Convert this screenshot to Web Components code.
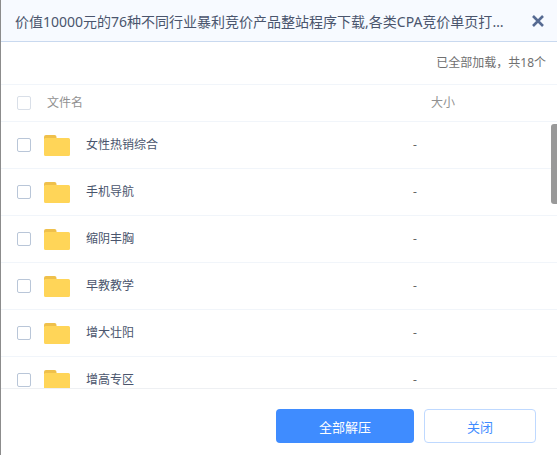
<!DOCTYPE html>
<html lang="zh">
<head>
<meta charset="utf-8">
<style>
  html, body { margin: 0; height: 100%; background: #fff; overflow: hidden; }
  body { font-family: "Noto Sans", "Noto Sans CJK SC", sans-serif; }
</style>
</head>
<body>
<archive-dialog>
  <span slot="title">价值10000元的76种不同行业暴利竞价产品整站程序下载,各类CPA竞价单页打包合集</span>
  <file-row name="女性热销综合"></file-row>
  <file-row name="手机导航"></file-row>
  <file-row name="缩阴丰胸"></file-row>
  <file-row name="早教教学"></file-row>
  <file-row name="增大壮阳"></file-row>
  <file-row name="增高专区"></file-row>
</archive-dialog>

<script>
// small square checkbox used in the header and in each row
class FileCheck extends HTMLElement {
  constructor() {
    super();
    this.attachShadow({ mode: 'open' });
    this.shadowRoot.innerHTML = `
      <style>
        :host {
          display: block;
          width: 14px;
          height: 14px;
          box-sizing: border-box;
          border: 1px solid var(--check-border, #b9c6d8);
          border-radius: 2px;
          background: #fff;
        }
      </style>`;
  }
}
customElements.define('file-check', FileCheck);

class FolderIcon extends HTMLElement {
  constructor() {
    super();
    this.attachShadow({ mode: 'open' });
    this.shadowRoot.innerHTML = `
      <style>
        :host { display: block; width: 26px; height: 21px; }
        svg { display: block; }
      </style>
      <svg width="26" height="21" viewBox="0 0 26 21">
        <path d="M0 2a2 2 0 0 1 2-2h8.500a2 2 0 0 1 2 2v2H0z" fill="#efc04b"/>
        <path d="M0 4.500a1.500 1.500 0 0 1 1.500-1.500h23a1.500 1.500 0 0 1 1.500 1.500V19.500a1.500 1.500 0 0 1-1.500 1.500h-23A1.500 1.500 0 0 1 0 19.500z" fill="#ffd558"/>
      </svg>`;
  }
}
customElements.define('folder-icon', FolderIcon);

class FileRow extends HTMLElement {
  constructor() {
    super();
    this.attachShadow({ mode: 'open' });
    this.shadowRoot.innerHTML = `
      <style>
        :host {
          display: grid;
          grid-template-columns: 14px 39px 1fr 144px;
          align-items: center;
          height: 46px;
          padding-left: 16px;
          border-bottom: 1px solid #f1f5fa;
          font-size: 12px;
          color: #4a556d;
        }
        folder-icon { margin-left: 13px; }
        .name { margin: 0 0 2px 16px; }
        .size { color: #666; margin-bottom: 2px; }
      </style>
      <file-check></file-check>
      <folder-icon></folder-icon>
      <span class="name"></span>
      <span class="size">-</span>`;
  }
  connectedCallback() {
    this.shadowRoot.querySelector('.name').textContent = this.getAttribute('name');
  }
}
customElements.define('file-row', FileRow);

class ArchiveDialog extends HTMLElement {
  constructor() {
    super();
    this.attachShadow({ mode: 'open' });
    this.shadowRoot.innerHTML = `
      <style>
        :host {
          display: flex;
          flex-direction: column;
          height: 455px;
          box-sizing: border-box;
          border-left: 1px solid #8c8c8c;
          color: #4a556d;
        }
        header {
          display: flex;
          align-items: center;
          flex: none;
          height: 41px;
          padding: 0 13px 0 14px;
          background: #f7faff;
          border-bottom: 1px solid #c9d9ef;
          font-size: 14px;
        }
        .title {
          flex: none;
          width: 494px;
          white-space: nowrap;
          overflow: hidden;
          text-overflow: ellipsis;
        }
        .close { margin-left: auto; display: block; }
        .status {
          flex: none;
          height: 40px;
          padding: 0 11px 2px 0;
          display: flex;
          align-items: center;
          justify-content: flex-end;
          border-bottom: 1px solid #f1f5fa;
          font-size: 12px;
          color: #707070;
        }
        .cols {
          flex: none;
          display: grid;
          grid-template-columns: 14px 1fr 126px;
          align-items: center;
          height: 36px;
          padding-left: 16px;
          border-bottom: 1px solid #f1f5fa;
          font-size: 12px;
          color: #919191;
          --check-border: #d9dfe8;
        }
        .cols .name { margin: 0 0 2px 16px; }
        .cols .size { margin-bottom: 2px; }
        .list {
          position: relative;
          flex: 1;
          min-height: 0;
          overflow: hidden;
          border-bottom: 1px solid #eef0f3;
        }
        .thumb {
          position: absolute;
          right: 0;
          top: 2px;
          width: 6px;
          height: 80px;
          border-radius: 3px 0 0 3px;
          background: #999;
        }
        footer {
          flex: none;
          height: 66px;
          display: flex;
          align-items: flex-start;
          gap: 10px;
          padding: 20px 21px 0 0;
          box-sizing: border-box;
          justify-content: flex-end;
        }
        button {
          height: 34px;
          padding: 0;
          box-sizing: border-box;
          border-radius: 4px;
          font: inherit;
          font-size: 13px;
        }
        .primary { width: 138px; background: #3f8cff; border: 0; color: #fff; }
        .plain { width: 112px; background: #fff; border: 1px solid #bfd9ff; color: #3f8cff; }
      </style>
      <header>
        <div class="title"><slot name="title"></slot></div>
        <svg class="close" width="12" height="12" viewBox="0 0 12 12">
          <path d="M1 1l10 10M11 1L1 11" stroke="#566a92" stroke-width="2.600" fill="none"/>
        </svg>
      </header>
      <div class="status">已全部加载，共18个</div>
      <div class="cols">
        <file-check></file-check>
        <span class="name">文件名</span>
        <span class="size">大小</span>
      </div>
      <div class="list">
        <slot></slot>
        <div class="thumb"></div>
      </div>
      <footer>
        <button class="primary">全部解压</button>
        <button class="plain">关闭</button>
      </footer>`;
  }
}
customElements.define('archive-dialog', ArchiveDialog);
</script>
</body>
</html>
